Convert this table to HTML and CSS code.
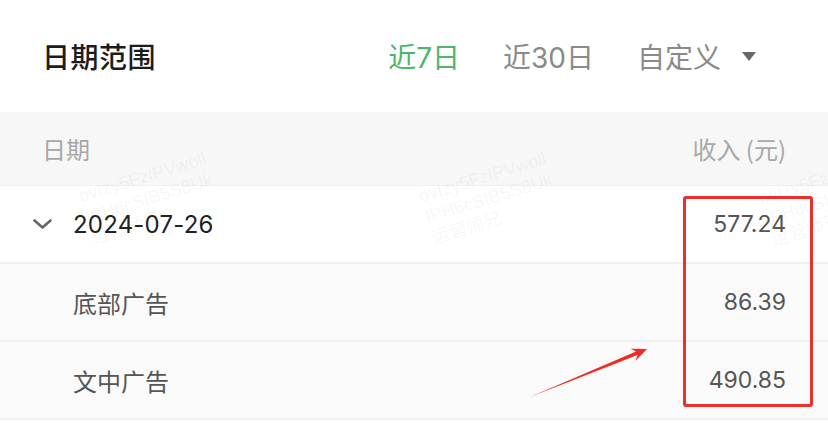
FILE: index.html
```html
<!DOCTYPE html>
<html lang="zh-CN">
<head>
<meta charset="utf-8">
<title>日期范围</title>
<link rel="stylesheet" href="styles.css">
</head>
<body>
<div class="page">
  <header class="range-bar">
    <div class="range-title">日期范围</div>
    <nav class="range-options">
      <span class="opt active">近7日</span>
      <span class="opt">近30日</span>
      <span class="opt custom">自定义<span class="caret"></span></span>
    </nav>
  </header>

  <div class="table">
    <div class="row head">
      <span class="cell-name">日期</span>
      <span class="cell-val">收入 (元)</span>
    </div>
    <div class="row day">
      <span class="cell-name">
        <svg class="chev" width="19" height="10" viewBox="0 0 19 10"><path d="M1.5 1.5 L9.5 8.5 L17.5 1.5" fill="none" stroke="#666" stroke-width="2.6" stroke-linecap="round" stroke-linejoin="round"/></svg>
        <span class="date">2024-07-26</span>
      </span>
      <span class="cell-val num">577.24</span>
    </div>
    <div class="row sub">
      <span class="cell-name">底部广告</span>
      <span class="cell-val num">86.39</span>
    </div>
    <div class="row sub">
      <span class="cell-name">文中广告</span>
      <span class="cell-val num">490.85</span>
    </div>
  </div>

  <div class="watermark wm1"><div>ovtzy5FzIPVwoll</div><div>IPH6cSIB5S8Uk</div><div>运营师兄</div></div>
  <div class="watermark wm2"><div>ovtzy5FzIPVwoll</div><div>IPH6cSIB5S8Uk</div><div>运营师兄</div></div>
  <div class="watermark wm3"><div>ovtzy5FzIPVwoll</div><div>IPH6cSIB5S8Uk</div><div>运营师兄</div></div>

  <div class="mark-box"></div>
  <svg class="mark-arrow" width="828" height="432" viewBox="0 0 828 432">
    <polygon points="530,397 636.1,351.5 630.6,348.7 647,349 635.6,360.7 637.5,354.9" fill="#f02a22"/>
  </svg>
</div>
</body>
</html>
```

FILE: styles.css
```css
* { box-sizing: border-box; }
html, body { margin: 0; padding: 0; background: #fff; }
body {
  font-family: "Noto Sans CJK SC", "Noto Sans", sans-serif;
  width: 828px;
  height: 432px;
  overflow: hidden;
}
.page { position: relative; width: 828px; height: 432px; overflow: hidden; }

.range-bar {
  height: 112px;
  display: flex;
  align-items: center;
  justify-content: space-between;
  padding: 0 72px 0 42px;
  background: #fff;
}
.range-title {
  font-size: 28px;
  color: #1c1c1c;
  font-weight: 500;
  letter-spacing: 0.5px;
}
.range-options {
  display: flex;
  align-items: center;
  gap: 43px;
  font-size: 28px;
  color: #8a8a8a;
}
.opt { font-family: "Inter", "Noto Sans CJK SC", sans-serif; }
.opt.active { color: #4fb56c; }
.custom { display: flex; align-items: center; }
.caret {
  width: 0; height: 0;
  margin-left: 21px;
  border-left: 7px solid transparent;
  border-right: 7px solid transparent;
  border-top: 9px solid #666;
}

.table { display: flex; flex-direction: column; }
.row {
  display: flex;
  align-items: center;
  justify-content: space-between;
  padding: 0 42px 0 73px;
  font-size: 24px;
  border-bottom: 2px solid #f0f0f0;
}
.row.head {
  height: 74px;
  background: #f7f7f7;
  padding-left: 42px;
  color: #a8a8a8;
  border-bottom-width: 1px;
}
.row.day { height: 78px; background: #fff; padding-left: 33px; color: #222; }
.row.sub { height: 78px; background: #fafafa; color: #555; }
.cell-name { display: flex; align-items: center; }
.chev { margin-right: 21px; }
.date, .num { font-family: "Inter", "Noto Sans", sans-serif; }
.date { color: #222; font-size: 24px; letter-spacing: 0.2px; }
.num { color: #555; font-size: 23px; }

.watermark {
  position: absolute;
  transform: rotate(-17deg);
  transform-origin: 0 0;
  font-family: "Liberation Sans", "Noto Sans CJK SC", sans-serif;
  font-size: 18px;
  line-height: 22px;
  color: rgba(0, 0, 0, 0.05);
  pointer-events: none;
  white-space: nowrap;
}
.wm1 { left: 76px; top: 186px; }
.wm2 { left: 416px; top: 186px; }
.wm3 { left: 756px; top: 188px; }

.mark-box {
  position: absolute;
  left: 683px;
  top: 196px;
  width: 130px;
  height: 211px;
  border: 3px solid #ec2f28;
  border-radius: 3px;
}
.mark-arrow { position: absolute; left: 0; top: 0; pointer-events: none; }
```
